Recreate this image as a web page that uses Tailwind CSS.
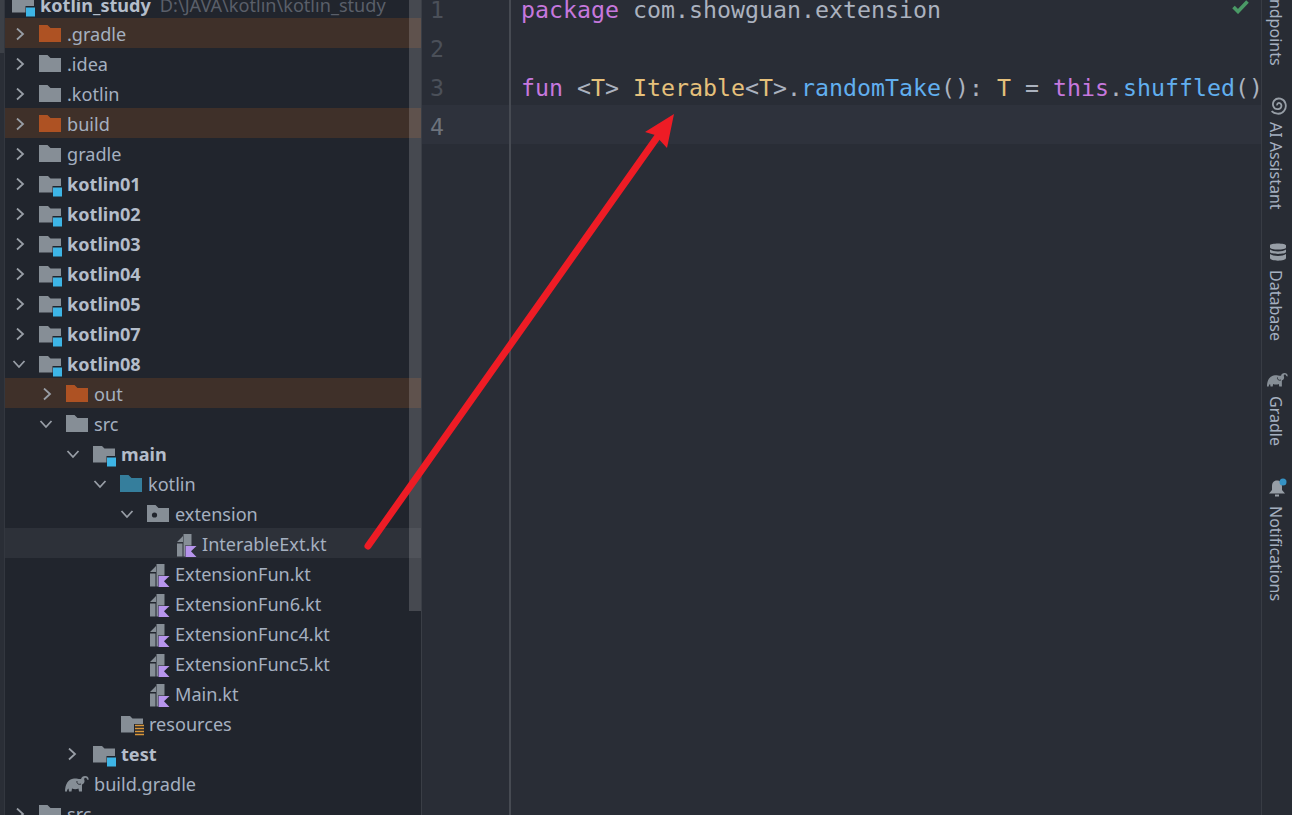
<!DOCTYPE html>
<html lang="en">
<head>
  <meta charset="UTF-8">
  <title>kotlin_study</title>
  <script src="https://cdn.jsdelivr.net/npm/@tailwindcss/browser@4"></script>
</head>
<body class="w-[1292px] h-[815px] overflow-hidden bg-[#21252d]">
  <!-- shared icons -->
  <svg class="hidden">
    <symbol id="right" viewBox="0 1 10 14"><path d="M2 1.500 8 7 2 12.500" fill="none" stroke="#989ea6" stroke-width="1.800"/></symbol>
    <symbol id="down" viewBox="0 1 14 10"><path d="M1.500 2 7 8 12.500 2" fill="none" stroke="#989ea6" stroke-width="1.800"/></symbol>
    <symbol id="folder" viewBox="0 1.500 24 20"><path d="M1 1.500H9.500L12.500 4.500H23V18.500H1Z" fill="#868e96"/></symbol>
    <symbol id="orange" viewBox="0 1.500 24 20"><path d="M1 1.500H9.500L12.500 4.500H23V18.500H1Z" fill="#ae5223"/></symbol>
    <symbol id="teal" viewBox="0 1.500 24 20"><path d="M1 1.500H9.500L12.500 4.500H23V18.500H1Z" fill="#357e9c"/></symbol>
    <symbol id="pkg" viewBox="0 1.500 24 20"><path d="M1 1.500H9.500L12.500 4.500H23V18.500H1Z" fill="#868e96"/><circle cx="8.500" cy="11.500" r="2.600" fill="#21252d"/></symbol>
    <symbol id="module" viewBox="0 2 24 22"><path d="M1 1.500H9.500L12.500 4.500H23V12H14.500V18.500H1Z" fill="#868e96"/><rect x="15" y="13.500" width="9" height="9" fill="#3db5e6"/></symbol>
    <symbol id="res" viewBox="0 2 24 22"><path d="M1 1.500H9.500L12.500 4.500H23V10H14V18.500H1Z" fill="#868e96"/><path d="M15 11.500H24M15 14.500H24M15 17.500H24M15 20.500H24" stroke="#d9963a" stroke-width="1.500"/></symbol>
    <symbol id="kt" viewBox="0 .5 20 24"><path d="M0 8.500 6 2.500V8.500ZM0 10H5.500V23H0ZM6.500 0H14.500V12H8V23H6.500Z" fill="#868e96"/><path d="M8.500 12.500H19.500L14 17.800 19.500 23.500H8.500Z" fill="#b694ec"/></symbol>
    <symbol id="elephant" viewBox="0 .5 24 16"><path d="M0 16C0 9 3 3.500 9 3 12 2.700 14 4 16 3.500 16.500 1.500 18 .5 20 .5 22.500 .5 24 2 23.500 4.500L22 4C22 2.800 21 2 20 2.200 19 2.500 19 4 19.500 5 19.800 7 18.500 8.500 17 9V16H14L13.500 13C11.500 14 9 14 7 13L6.500 16H4L3.500 13C2.500 13.500 2 14.500 2 16Z" fill="#868e96"/><path d="M12 5.500C11.500 8 13.500 9.500 16 8.500" fill="none" stroke="#21252d" stroke-width=".9"/></symbol>
    <symbol id="bell" viewBox="0 0 20 20"><path d="M9 2.500C5.500 2.500 4 5 4 8.500V12L1 15.500H17L14 12V8.500C14 5 12.500 2.500 9 2.500ZM7 16.500H11V18.500H7Z" fill="#979ea6"/><circle cx="15" cy="4" r="3.500" fill="#3592c4"/></symbol>
    <symbol id="db" viewBox="0 0 18 20"><path d="M1 3.500C1 .8 17 .8 17 3.500V5.500C17 8.200 1 8.200 1 5.500ZM1 7.500C4 10 14 10 17 7.500V10C17 12.500 1 12.500 1 10ZM1 12C4 14.500 14 14.500 17 12V16C17 19.500 1 19.500 1 16Z" fill="#979ea6"/></symbol>
    <symbol id="spiral" viewBox="3 2 14 14"><path d="M9.500 9.500C8 10 7 8.500 8 7.200 9.500 5.500 12.500 6.500 12.500 9.500 12.500 12.500 8.500 14 5.800 12 3 9.500 4 4.500 8 3.200 12 2 16.500 5 16 9.500 15.800 11.500 15 13 14 14" fill="none" stroke="#979ea6" stroke-width="1.400"/></symbol>
  </svg>

  <div class="flex h-[815px] overflow-hidden">
    <!-- left edge strip -->
    <div class="w-[5px] shrink-0 bg-[#2a2e36] border-r border-[#33373f]">
      <div class="h-[53px] bg-[#3c4047]"></div>
    </div>

    <!-- project tree -->
    <div class="relative w-[417px] shrink-0 overflow-hidden bg-[#21252d] text-[18.100px] text-[#a5b0c0] font-['Noto_Sans',sans-serif] border-r border-[#3a3e46]">
      <div class="-mt-[11px]">
        <div class="flex items-center h-[29px] pt-[4px] pl-[6px] whitespace-nowrap"><svg class="w-[24px] h-[22px] mr-[5px] mt-[3px] shrink-0"><use href="#module"/></svg><span class="font-bold text-[#b4bdca]">kotlin_study</span><span class="ml-[9px] text-[#5a5f69]">D:\JAVA\kotlin\kotlin_study</span></div>

        <div class="flex items-center h-[30px] pt-[4px] pl-[5px] bg-[#3f3029]"><span class="w-[29px] pl-[5px]"><svg class="w-[10px] h-[14px] block"><use href="#right"/></svg></span><svg class="w-[24px] h-[20px] -ml-px mr-[5px]"><use href="#orange"/></svg>.gradle</div>
        <div class="flex items-center h-[30px] pt-[4px] pl-[5px]"><span class="w-[29px] pl-[5px]"><svg class="w-[10px] h-[14px] block"><use href="#right"/></svg></span><svg class="w-[24px] h-[20px] -ml-px mr-[5px]"><use href="#folder"/></svg>.idea</div>
        <div class="flex items-center h-[30px] pt-[4px] pl-[5px]"><span class="w-[29px] pl-[5px]"><svg class="w-[10px] h-[14px] block"><use href="#right"/></svg></span><svg class="w-[24px] h-[20px] -ml-px mr-[5px]"><use href="#folder"/></svg>.kotlin</div>
        <div class="flex items-center h-[30px] pt-[4px] pl-[5px] bg-[#3f3029]"><span class="w-[29px] pl-[5px]"><svg class="w-[10px] h-[14px] block"><use href="#right"/></svg></span><svg class="w-[24px] h-[20px] -ml-px mr-[5px]"><use href="#orange"/></svg>build</div>
        <div class="flex items-center h-[30px] pt-[4px] pl-[5px]"><span class="w-[29px] pl-[5px]"><svg class="w-[10px] h-[14px] block"><use href="#right"/></svg></span><svg class="w-[24px] h-[20px] -ml-px mr-[5px]"><use href="#folder"/></svg>gradle</div>

        <div class="flex items-center h-[30px] pt-[4px] pl-[5px] font-bold text-[#b4bdca]"><span class="w-[29px] pl-[5px]"><svg class="w-[10px] h-[14px] block"><use href="#right"/></svg></span><svg class="w-[24px] h-[22px] -ml-px mr-[5px] mt-[3px]"><use href="#module"/></svg>kotlin01</div>
        <div class="flex items-center h-[30px] pt-[4px] pl-[5px] font-bold text-[#b4bdca]"><span class="w-[29px] pl-[5px]"><svg class="w-[10px] h-[14px] block"><use href="#right"/></svg></span><svg class="w-[24px] h-[22px] -ml-px mr-[5px] mt-[3px]"><use href="#module"/></svg>kotlin02</div>
        <div class="flex items-center h-[30px] pt-[4px] pl-[5px] font-bold text-[#b4bdca]"><span class="w-[29px] pl-[5px]"><svg class="w-[10px] h-[14px] block"><use href="#right"/></svg></span><svg class="w-[24px] h-[22px] -ml-px mr-[5px] mt-[3px]"><use href="#module"/></svg>kotlin03</div>
        <div class="flex items-center h-[30px] pt-[4px] pl-[5px] font-bold text-[#b4bdca]"><span class="w-[29px] pl-[5px]"><svg class="w-[10px] h-[14px] block"><use href="#right"/></svg></span><svg class="w-[24px] h-[22px] -ml-px mr-[5px] mt-[3px]"><use href="#module"/></svg>kotlin04</div>
        <div class="flex items-center h-[30px] pt-[4px] pl-[5px] font-bold text-[#b4bdca]"><span class="w-[29px] pl-[5px]"><svg class="w-[10px] h-[14px] block"><use href="#right"/></svg></span><svg class="w-[24px] h-[22px] -ml-px mr-[5px] mt-[3px]"><use href="#module"/></svg>kotlin05</div>
        <div class="flex items-center h-[30px] pt-[4px] pl-[5px] font-bold text-[#b4bdca]"><span class="w-[29px] pl-[5px]"><svg class="w-[10px] h-[14px] block"><use href="#right"/></svg></span><svg class="w-[24px] h-[22px] -ml-px mr-[5px] mt-[3px]"><use href="#module"/></svg>kotlin07</div>
        <div class="flex items-center h-[30px] pt-[4px] pl-[5px] font-bold text-[#b4bdca]"><span class="w-[29px] pl-[2px]"><svg class="w-[14px] h-[10px] block"><use href="#down"/></svg></span><svg class="w-[24px] h-[22px] -ml-px mr-[5px] mt-[3px]"><use href="#module"/></svg>kotlin08</div>

        <div class="flex items-center h-[30px] pt-[4px] pl-[32px] bg-[#3f3029]"><span class="w-[29px] pl-[5px]"><svg class="w-[10px] h-[14px] block"><use href="#right"/></svg></span><svg class="w-[24px] h-[20px] -ml-px mr-[5px]"><use href="#orange"/></svg>out</div>
        <div class="flex items-center h-[30px] pt-[4px] pl-[32px]"><span class="w-[29px] pl-[2px]"><svg class="w-[14px] h-[10px] block"><use href="#down"/></svg></span><svg class="w-[24px] h-[20px] -ml-px mr-[5px]"><use href="#folder"/></svg>src</div>
        <div class="flex items-center h-[30px] pt-[4px] pl-[59px] font-bold text-[#b4bdca]"><span class="w-[29px] pl-[2px]"><svg class="w-[14px] h-[10px] block"><use href="#down"/></svg></span><svg class="w-[24px] h-[22px] -ml-px mr-[5px] mt-[3px]"><use href="#module"/></svg>main</div>
        <div class="flex items-center h-[30px] pt-[4px] pl-[86px]"><span class="w-[29px] pl-[2px]"><svg class="w-[14px] h-[10px] block"><use href="#down"/></svg></span><svg class="w-[24px] h-[20px] -ml-px mr-[5px]"><use href="#teal"/></svg>kotlin</div>
        <div class="flex items-center h-[30px] pt-[4px] pl-[113px]"><span class="w-[29px] pl-[2px]"><svg class="w-[14px] h-[10px] block"><use href="#down"/></svg></span><svg class="w-[24px] h-[20px] -ml-px mr-[5px]"><use href="#pkg"/></svg>extension</div>

        <div class="flex items-center h-[30px] pt-[4px] pl-[172px] bg-[#2d3139]"><svg class="w-[20px] h-[24px] mr-[5px] mt-[1px]"><use href="#kt"/></svg>InterableExt.kt</div>
        <div class="flex items-center h-[30px] pt-[4px] pl-[145px]"><svg class="w-[20px] h-[24px] mr-[5px] mt-[1px]"><use href="#kt"/></svg>ExtensionFun.kt</div>
        <div class="flex items-center h-[30px] pt-[4px] pl-[145px]"><svg class="w-[20px] h-[24px] mr-[5px] mt-[1px]"><use href="#kt"/></svg>ExtensionFun6.kt</div>
        <div class="flex items-center h-[30px] pt-[4px] pl-[145px]"><svg class="w-[20px] h-[24px] mr-[5px] mt-[1px]"><use href="#kt"/></svg>ExtensionFunc4.kt</div>
        <div class="flex items-center h-[30px] pt-[4px] pl-[145px]"><svg class="w-[20px] h-[24px] mr-[5px] mt-[1px]"><use href="#kt"/></svg>ExtensionFunc5.kt</div>
        <div class="flex items-center h-[30px] pt-[4px] pl-[145px]"><svg class="w-[20px] h-[24px] mr-[5px] mt-[1px]"><use href="#kt"/></svg>Main.kt</div>

        <div class="flex items-center h-[30px] pt-[4px] pl-[115px]"><svg class="w-[24px] h-[22px] mr-[5px] mt-[3px]"><use href="#res"/></svg>resources</div>
        <div class="flex items-center h-[30px] pt-[4px] pl-[59px] font-bold text-[#b4bdca]"><span class="w-[29px] pl-[3px]"><svg class="w-[10px] h-[14px] block"><use href="#right"/></svg></span><svg class="w-[24px] h-[22px] -ml-px mr-[5px] mt-[3px]"><use href="#module"/></svg>test</div>
        <div class="flex items-center h-[30px] pt-[4px] pl-[60px]"><svg class="w-[24px] h-[16px] mr-[5px] -mt-[2px]"><use href="#elephant"/></svg>build.gradle</div>
        <div class="flex items-center h-[30px] pt-[4px] pl-[5px]"><span class="w-[29px] pl-[5px]"><svg class="w-[10px] h-[14px] block"><use href="#right"/></svg></span><svg class="w-[24px] h-[20px] -ml-px mr-[5px]"><use href="#folder"/></svg>src</div>
      </div>
      <!-- overlay scrollbar -->
      <div class="absolute top-0 left-[404px] w-[12px] h-[611px] bg-white/[0.17]"></div>
    </div>

    <!-- editor -->
    <div class="relative flex-1 flex overflow-hidden bg-[#292d36] font-['DejaVu_Sans_Mono',monospace] text-[23.250px] leading-[39px]">
      <div class="w-[89px] shrink-0 border-r-2 border-[#464a52] -mt-[12px] text-[#4b5059]">
        <div class="h-[39px] pt-[2px] pl-[8px]">1</div>
        <div class="h-[39px] pt-[2px] pl-[8px]">2</div>
        <div class="h-[39px] pt-[2px] pl-[8px]">3</div>
        <div class="h-[39px] pt-[2px] pl-[8px] bg-[#2e323c] text-[#6d737d]">4</div>
      </div>
      <div class="flex-1 -mt-[12px] text-[#abb2bf]">
        <div class="h-[39px] pt-[2px] pl-[10px] whitespace-pre"><span class="text-[#c678dd]">package</span> com.showguan.extension</div>
        <div class="h-[39px]"></div>
        <div class="h-[39px] pt-[2px] pl-[10px] whitespace-pre"><span class="text-[#c678dd]">fun</span> &lt;<span class="text-[#e5c07b]">T</span>&gt; <span class="text-[#e5c07b]">Iterable</span>&lt;<span class="text-[#e5c07b]">T</span>&gt;.<span class="text-[#61afef]">randomTake</span>(): <span class="text-[#e5c07b]">T</span> = <span class="text-[#c678dd]">this</span>.<span class="text-[#61afef]">shuffled</span>()</div>
        <div class="h-[39px] bg-[#2e323c]"></div>
      </div>
      <svg class="absolute top-0 right-[12px] w-[17px] h-[14px]" viewBox="0 0 17 14"><path d="M1.500 7 6 11.500 15.500 1.500" fill="none" stroke="#4a9a66" stroke-width="3.600"/></svg>
    </div>

    <!-- right tool strip -->
    <div class="w-[31px] shrink-0 pr-[3px] bg-[#282c34] border-l border-[#383c44] flex flex-col items-center text-[16px] text-[#a5b0c0] font-['Noto_Sans',sans-serif] leading-[18px] -mt-[10px] h-[825px]">
      <span class="[writing-mode:vertical-rl]">Endpoints</span>
      <svg class="w-[18px] h-[18px] mt-[31px] ml-[4px] shrink-0 rotate-90"><use href="#spiral"/></svg>
      <span class="[writing-mode:vertical-rl] mt-[7px]">AI Assistant</span>
      <svg class="w-[18px] h-[20px] mt-[33px] ml-[4px] shrink-0"><use href="#db"/></svg>
      <span class="[writing-mode:vertical-rl] mt-[8px]">Database</span>
      <svg class="w-[21px] h-[16px] mt-[31px] ml-[4px] shrink-0"><use href="#elephant"/></svg>
      <span class="[writing-mode:vertical-rl] mt-[8px]">Gradle</span>
      <svg class="w-[20px] h-[20px] mt-[32px] ml-[4px] shrink-0"><use href="#bell"/></svg>
      <span class="[writing-mode:vertical-rl] mt-[8px]">Notifications</span>
    </div>
  </div>

  <!-- red annotation arrow on top of the window -->
  <svg class="absolute top-0 left-0 pointer-events-none" width="1292" height="815" viewBox="0 0 1292 815">
    <path d="M368 546 658 136" fill="none" stroke="#ee1c25" stroke-width="7" stroke-linecap="round"/>
    <path d="M674 114 645 132 655 135 667 148Z" fill="#ee1c25"/>
  </svg>
</body>
</html>
